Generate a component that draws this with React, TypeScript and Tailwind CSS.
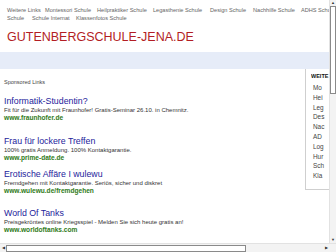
const navTop = [
  { t: "Weitere Links", w: "w-[38px]" },
  { t: "Montessori Schule", w: "w-[52px]" },
  { t: "Heilpraktiker Schule", w: "w-[56px]" },
  { t: "Legasthenie Schule", w: "w-[57px]" },
  { t: "Design Schule", w: "w-[43px]" },
  { t: "Nachhilfe Schule", w: "w-[48px]" },
  { t: "ADHS Schule", w: "w-[40px]" },
];
const navBottom = [
  { t: "Schule", w: "w-[25px]" },
  { t: "Schule Internat", w: "w-[44px]" },
  { t: "Klassenfotos Schule", w: "w-[60px]" },
];

const ads = [
  {
    title: "Informatik-Studentin?",
    text: "Fit für die Zukunft mit Fraunhofer! Gratis-Seminar 26.10. in Chemnitz.",
    url: "www.fraunhofer.de",
    space: "mt-[10px]",
  },
  {
    title: "Frau für lockere Treffen",
    text: "100% gratis Anmeldung. 100% Kontaktgarantie.",
    url: "www.prime-date.de",
    space: "mt-[14px]",
  },
  {
    title: "Erotische Affäre I wulewu",
    text: "Fremdgehen mit Kontaktgarantie. Seriös, sicher und diskret",
    url: "www.wulewu.de/fremdgehen",
    space: "mt-[7px]",
  },
  {
    title: "World Of Tanks",
    text: "Preisgekröntes online Kriegsspiel - Melden Sie sich heute gratis an!",
    url: "www.worldoftanks.com",
    space: "mt-[13px]",
  },
];

const sideLinks = ["Mo", "Hei", "Leg", "Des", "Nac", "AD", "Log", "Hur", "Sch", "Kla"];

export default function App() {
  return (
    <div className="w-[336px] h-[252px] overflow-hidden bg-white flex flex-col font-['Liberation_Sans',Arial,sans-serif]">
      <div className="flex flex-1 min-h-0">
        {/* page */}
        <div className="flex-1 min-w-0 overflow-hidden flex flex-col">
          {/* top links */}
          <div className="pt-[6px] pl-[7px] text-[5.6px] leading-[8px] text-[#666]">
            <div className="flex whitespace-nowrap">
              {navTop.map((n) => (
                <span key={n.t} className={`${n.w} shrink-0`}>
                  {n.t}
                </span>
              ))}
            </div>
            <div className="flex whitespace-nowrap">
              {navBottom.map((n) => (
                <span key={n.t} className={`${n.w} shrink-0`}>
                  {n.t}
                </span>
              ))}
            </div>
          </div>

          {/* site name */}
          <div className="px-[7px] mt-[8px] text-[12.5px] leading-[14px] text-[#b31d24]">
            GUTENBERGSCHULE-JENA.DE
          </div>

          <div className="mt-[8px] h-[17px] bg-[#e6ecf8]" />

          <div className="flex flex-1 min-h-0">
            {/* ads */}
            <div className="flex-1 min-w-0 pl-[4px] pt-[9px]">
              <div className="text-[5.5px] leading-[8px] text-[#444]">Sponsored Links</div>
              {ads.map((a) => (
                <div key={a.url} className={a.space}>
                  <div className="text-[8.8px] leading-[10px] text-[#23239b]">{a.title}</div>
                  <div className="text-[6px] leading-[8px] text-[#333] whitespace-nowrap">{a.text}</div>
                  <div className="text-[6.6px] leading-[8px] font-bold text-[#2f7a18]">{a.url}</div>
                </div>
              ))}
            </div>

            {/* sidebar */}
            <div className="w-[24px] self-start border-l border-b border-[#cfcfcf] pl-[5px] pt-[3px] pb-[8px] overflow-hidden whitespace-nowrap">
              <div className="text-[5.5px] leading-[8px] font-bold text-[#111] overflow-hidden">WEITE</div>
              <div className="pl-[2px] mt-[3px] text-[6.4px] leading-[9.8px] text-[#444]">
                {sideLinks.map((s) => (
                  <div key={s}>{s}</div>
                ))}
              </div>
            </div>
          </div>
        </div>

        {/* vertical scrollbar */}
        <div className="w-[7px] bg-[#f3f3f3] border-l border-[#e2e2e2] flex flex-col items-center">
          <div className="h-[6px] flex items-center justify-center text-[4px] leading-none text-[#333]">▲</div>
          <div className="w-[6px] h-[88px] bg-white border border-[#8a8a8a]" />
          <div className="flex-1" />
          <div className="h-[6px] flex items-center justify-center text-[4px] leading-none text-[#333]">▼</div>
        </div>
      </div>

      {/* horizontal scrollbar */}
      <div className="h-[9px] bg-[#f3f3f3] border-t border-[#e2e2e2] flex items-center">
        <div className="w-[6px] flex items-center justify-center text-[4px] leading-none text-[#333]">◀</div>
        <div className="w-[240px] h-[7px] bg-white border border-[#8a8a8a]" />
        <div className="flex-1" />
        <div className="w-[6px] flex items-center justify-center text-[4px] leading-none text-[#333]">▶</div>
        <div className="w-[7px]" />
      </div>
    </div>
  );
}
